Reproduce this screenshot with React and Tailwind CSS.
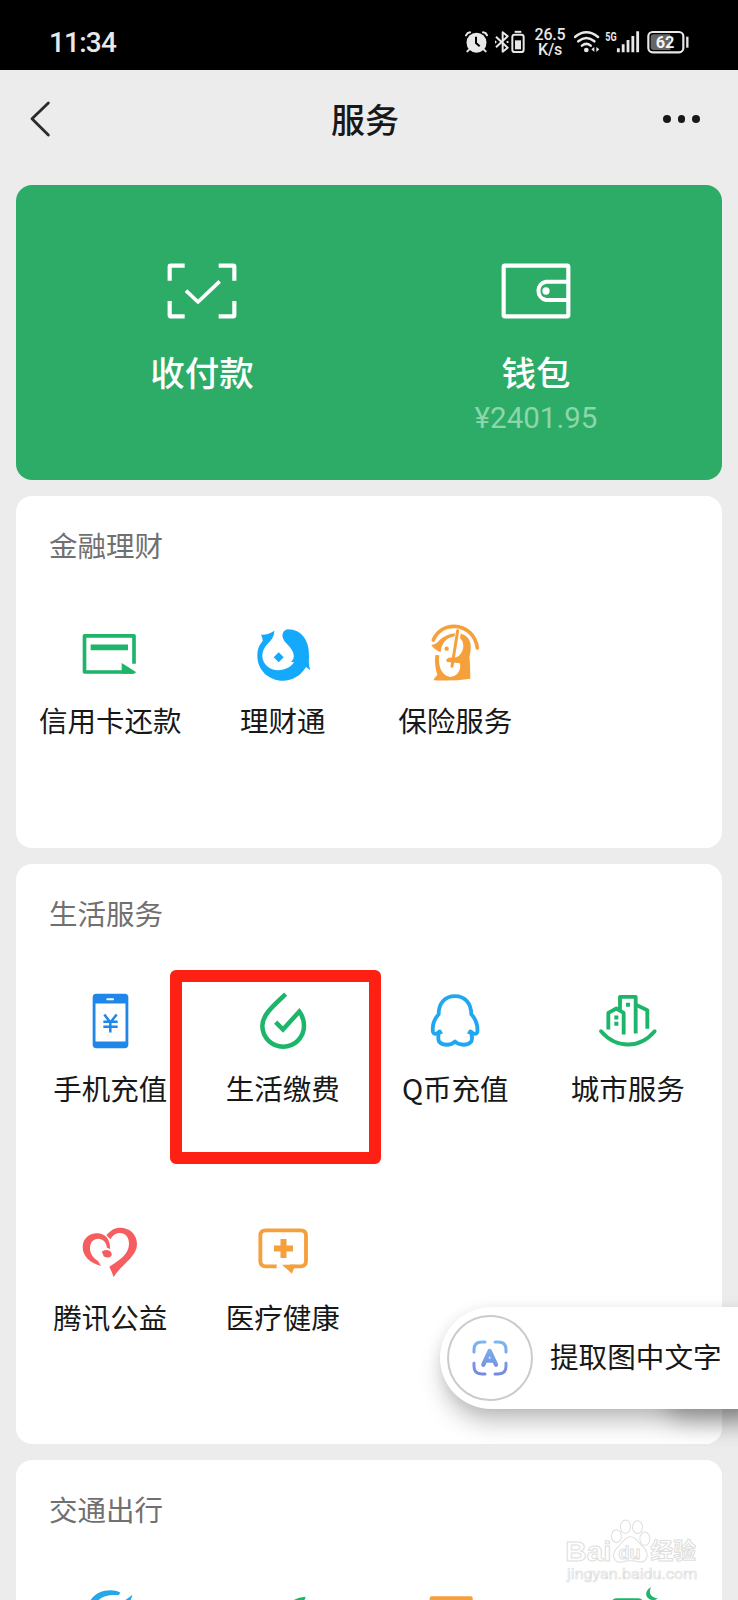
import React from "react";

const GREEN = "#1db56a";
const BLUE = "#14a9fb";
const ORANGE = "#f6a03c";

const Svg = ({ box, children, className = "h-[60px] w-[60px]" }) => (
  <svg viewBox={box} className={`shrink-0 ${className}`} fill="none">
    {children}
  </svg>
);

const CreditIcon = () => (
  <Svg box="181 337 180 180">
    <path d="M343 459V375.500H194.500V484H340" stroke={GREEN} strokeWidth="11" strokeLinejoin="round" />
    <path d="M213 410H325" stroke={GREEN} strokeWidth="17" />
    <path d="M306 457L349 484Q347 489 342 489H306Z" fill={GREEN} />
  </Svg>
);

const FundIcon = () => (
  <Svg box="698 337 180 180">
    <path
      fill={BLUE}
      d="M802 356C845 356 868 392 866 438Q864 462 870 479L857 469C842 495 815 510 788 510C745 510 711 478 711 435C711 415 717 402 727 391Q727 380 722 372Q742 374 762 360Q762 378 748 393C733 407 726 420 726 437C727 462 749 479 773 479C796 479 813 468 821 455L812 453Q822 446 820 433C818 408 790 400 786 376Q787 358 802 356Z"
    />
    <path d="M775 425L790 440L775 455L760 440Z" fill={BLUE} />
  </Svg>
);

const InsuranceIcon = () => (
  <Svg box="256 67 180 180">
    <path d="M281 118C292 92 315 77 343 77C380 77 408 104 413 142" stroke={ORANGE} strokeWidth="11" strokeLinecap="round" />
    <path
      fill={ORANGE}
      d="M287 163L299 164C295 193 303 225 332 229C357 227 364 205 361 188L322 184Q316 176 327 171L350 170Q369 160 371 138Q371 120 361 113L363 99C385 103 396 122 393 148Q387 168 391 190L392 234Q340 242 281 239Q284 230 293 223Q283 190 287 163Z"
    />
    <path fill={ORANGE} d="M275 133Q290 131 300 118Q318 101 346 98L345 107Q322 112 313 125Q304 137 303 155Q285 149 275 133Z" />
    <path d="M354 90L337 197" stroke={ORANGE} strokeWidth="9" strokeLinecap="round" />
    <circle cx="321" cy="144" r="6.500" fill={ORANGE} />
  </Svg>
);

const PhoneIcon = () => (
  <Svg box="151 91.500 180 180">
    <rect x="189" y="100" width="107" height="163" rx="11" fill="#1f86ea" />
    <rect x="197.500" y="129" width="90" height="114" fill="#fff" />
    <path d="M233 116H250" stroke="#fff" strokeWidth="6" strokeLinecap="round" />
    <path d="M224 162L242 186L261 162M242 186V216M221 184H264M221 199H264" stroke="#1f86ea" strokeWidth="7.500" />
  </Svg>
);

const DropIcon = () => (
  <Svg box="668 91.500 180 180">
    <path
      d="M766 101C732 133 696 162 696 196A62.500 62.500 0 0 0 821 196Q821 172 807 153L758 207L736 185"
      stroke={GREEN}
      strokeWidth="13.500"
    />
  </Svg>
);

const QCoinIcon = () => (
  <Svg box="136 91.500 180 180">
    <path
      d="M226 107C196 107 177 128 177 161C163 177 157 195 160 214Q165 227 179 213Q173 232 178 243C188 256 214 256 226 243C239 256 264 256 275 243Q280 232 273 213Q288 227 293 214C295 195 289 177 275 161C274 128 256 107 226 107Z"
      stroke="#1fa8f0"
      strokeWidth="11.500"
      strokeLinejoin="round"
    />
    <path d="M183 206L190 220L176 221ZM269 206L262 220L276 221Z" fill="#1fa8f0" />
  </Svg>
);

const CityIcon = () => (
  <Svg box="653 91.500 180 180">
    <g stroke={GREEN} strokeWidth="11.500">
      <path d="M662 212Q697 252 743 252Q789 252 823 212" strokeLinecap="round" />
      <path d="M684 207V157L708 144L730 157V222" strokeLinejoin="round" />
      <path d="M719 148V109H766V219" strokeLinejoin="round" />
      <path d="M767 133L801 149V205" strokeLinejoin="round" />
    </g>
    <path d="M737 127h12v12h-12zM702 165h12v12h-12zM702 184h12v12h-12z" fill={GREEN} />
  </Svg>
);

const HeartIcon = () => (
  <Svg box="151 57 180 180">
    <g fill="#f65d61">
      <path d="M241 144C242 116 228 97 202 97C177 97 159 114 159 139C159 168 184 187 214 195L205 180C190 171 181 158 181 142C181 124 191 113 206 113C220 113 230 124 232 140Z" />
      <path d="M230 103C243 87 256 80 271 80C300 80 322 100 322 129C322 168 277 188 252 228Q246 212 239 197C270 177 298 159 298 128C298 108 286 96 271 96C257 96 249 104 242 115Z" />
      <path d="M216 152Q226 144 240 149Q249 156 245 165Q236 174 222 166Q220 158 216 152Z" />
    </g>
  </Svg>
);

const MedicalIcon = () => (
  <Svg box="668 57 180 180">
    <path
      d="M739 196H706Q690 196 690 180V104Q690 88 706 88H811Q827 88 827 104V180Q827 196 811 196H778"
      stroke={ORANGE}
      strokeWidth="11.500"
    />
    <path d="M755 191H795L785 218Z" fill={ORANGE} />
    <path d="M731 142.500H788M759.500 114V171" stroke={ORANGE} strokeWidth="18" />
  </Svg>
);

const TravelIcon = () => (
  <Svg box="241 439.500 180 180">
    <path
      fill="#27a6e8"
      d="M266 490C281 460 305 449 332 449Q350 449 362 456L357 464C325 461 300 468 288 490V530H266ZM398 463Q396 478 384 492H346Q378 482 398 463Z"
    />
  </Svg>
);

const LeafIcon = () => (
  <Svg box="758 439.500 180 180">
    <path fill={GREEN} d="M916 469Q914 480 902 490H866Q884 470 916 469ZM846 481Q858 477 866 483L862 492H850Z" />
  </Svg>
);

const TicketIcon = () => (
  <Svg box="76 289.500 180 180">
    <rect x="90" y="317" width="129" height="120" rx="6" fill={ORANGE} />
  </Svg>
);

const HotelIcon = () => (
  <Svg box="593 289.500 180 180">
    <path fill={GREEN} d="M634 340Q634 323 648 323H714Q728 323 730 340ZM752 290C744 307 750 320 772 324C764 331 750 330 742 322C733 311 738 297 752 290Z" />
  </Svg>
);

const finance = [
  { label: "信用卡还款", icon: CreditIcon },
  { label: "理财通", icon: FundIcon },
  { label: "保险服务", icon: InsuranceIcon },
];

const life = [
  { label: "手机充值", icon: PhoneIcon },
  { label: "生活缴费", icon: DropIcon },
  { label: "Q币充值", icon: QCoinIcon },
  { label: "城市服务", icon: CityIcon },
  { label: "腾讯公益", icon: HeartIcon },
  { label: "医疗健康", icon: MedicalIcon },
];

const travel = [{ icon: TravelIcon }, { icon: LeafIcon }, { icon: TicketIcon }, { icon: HotelIcon }];

const Section = ({ title, items, className = "" }) => (
  <section className={`mx-4 mt-4 shrink-0 rounded-2xl bg-white px-2 ${className}`}>
    <h2 className="h-[91px] pt-[29px] pl-[25px] text-[28.500px] leading-10 text-[#707070]">{title}</h2>
    <div className="grid grid-cols-4">
      {items.map(({ label, icon: Icon }, i) => (
        <div key={i} className="flex h-[228.500px] flex-col items-center pt-9">
          <Icon />
          <span className="mt-[17px] text-[28.500px] leading-10 whitespace-nowrap text-[#181818]">{label}</span>
        </div>
      ))}
    </div>
  </section>
);

const StatusBar = () => (
  <div className="flex h-[70px] shrink-0 items-center justify-between bg-black pt-[14px] pr-[49px] pl-[49px] font-['Roboto',sans-serif] text-[#e8e8e8]">
    <span className="mt-[2px] text-[28px] leading-8 font-medium tracking-[-0.8px]">11:34</span>
    <div className="flex items-center">
      <Svg box="75 81 69 90" className="h-[30px] w-[23px]">
        <circle cx="109.500" cy="128" r="30" fill="#e8e8e8" />
        <path d="M78 106Q82 98 90 97M129 97Q138 98 141 106M88 148L82 154M131 148L137 154" stroke="#e8e8e8" strokeWidth="6" strokeLinecap="round" />
        <path d="M108 110V129L119 139" stroke="#000" strokeWidth="6" />
      </Svg>
      <Svg box="165 81 42 90" className="ml-[7px] h-[30px] w-[14px]">
        <path d="M168 110L203 143L188 155V97L203 109L168 142" stroke="#e8e8e8" strokeWidth="6" strokeLinejoin="round" />
        <path d="M165 121l6 5l-6 5zM198 126l5-4l4 4l-4 4z" fill="#e8e8e8" />
      </Svg>
      <Svg box="213 81 42 90" className="ml-[2px] h-[30px] w-[14px]">
        <rect x="217" y="104" width="34" height="52" rx="7" stroke="#e8e8e8" strokeWidth="6" />
        <path d="M224 95.500H244" stroke="#e8e8e8" strokeWidth="6" />
        <path d="M225 121H243V148H225Z" fill="#e8e8e8" />
      </Svg>
      <div className="ml-[9px] flex w-8 flex-col items-center text-[16px] leading-[15px] font-medium tracking-[-0.2px]">
        <span>26.5</span>
        <span>K/s</span>
      </div>
      <Svg box="402 81 78 90" className="ml-2 h-[30px] w-[26px]">
        <path d="M405 111Q439 83 474 111M415 124Q439 104 463 124M426 137Q439 126 452 137" stroke="#e8e8e8" strokeWidth="7.500" strokeLinecap="round" />
        <circle cx="439" cy="150" r="7" fill="#e8e8e8" />
        <path d="M454 148L463 141V156ZM478 148L469 141V156Z" fill="#e8e8e8" />
      </Svg>
      <Svg box="495 81 105 90" className="ml-[5px] h-[30px] w-[35px]">
        <text x="496" y="122" fontSize="38" fontWeight="700" textLength="34" lengthAdjust="spacingAndGlyphs" fill="#e8e8e8">
          5G
        </text>
        <path d="M535 157V145M549.500 157V133M564 157V120M578.500 157V108M593 157V94" stroke="#e8e8e8" strokeWidth="8.500" />
      </Svg>
      <Svg box="621 81 126 90" className="ml-[7px] h-[30px] w-[42px]">
        <rect x="625" y="96" width="105" height="61" rx="13" stroke="#e8e8e8" strokeWidth="6.500" />
        <path d="M641 103H691V150H641Q632 150 632 141V112Q632 103 641 103Z" fill="#666" />
        <path d="M742 110V143" stroke="#e8e8e8" strokeWidth="7" />
        <text x="675" y="144" fontSize="49" fontWeight="700" textAnchor="middle" fill="#f4f4f4">
          62
        </text>
      </Svg>
    </div>
  </div>
);

const Header = () => (
  <header className="flex h-[100px] shrink-0 items-center justify-between pr-[39px] pl-7">
    <Svg box="84 297 72 120" className="mb-[2px] h-10 w-6">
      <path d="M145 309L96 356.500L145 405" stroke="#2b2b2b" strokeWidth="8.500" strokeLinecap="round" strokeLinejoin="round" />
    </Svg>
    <h1 className="mb-[2px] ml-[15px] text-[34px] leading-10 font-medium text-[#181818]">服务</h1>
    <div className="mb-[2px] flex w-9 gap-[7.200px]">
      <i className="h-[7.500px] w-[7.500px] shrink-0 rounded-full bg-[#181818]" />
      <i className="h-[7.500px] w-[7.500px] shrink-0 rounded-full bg-[#181818]" />
      <i className="h-[7.500px] w-[7.500px] shrink-0 rounded-full bg-[#181818]" />
    </div>
  </header>
);

const PayCard = () => (
  <section className="mx-4 mt-[15px] flex h-[295px] shrink-0 rounded-2xl bg-[#2dac68] px-[19px] pt-[76px] text-white">
    <div className="flex flex-1 flex-col items-center">
      <Svg box="112 64 210 180" className="h-[60px] w-[70px]">
        <path
          d="M120 123V81Q120 78 123 78H165M267 78H311Q314 78 314 81V123M314 184V227Q314 230 311 230H267M165 230H123Q120 230 120 227V184"
          stroke="#fff"
          strokeWidth="12.500"
        />
        <path d="M169 153L205 187L270 125" stroke="#fff" strokeWidth="11" strokeLinejoin="round" />
      </Svg>
      <span className="mt-7 text-[34.500px] leading-[44px] font-medium">收付款</span>
    </div>
    <div className="flex flex-1 flex-col items-center">
      <Svg box="153 64 210 180" className="h-[60px] w-[70px]">
        <rect x="161" y="78" width="194" height="152" rx="4" stroke="#fff" strokeWidth="12.500" />
        <path d="M352 126H288A28 28 0 0 0 288 181H352" stroke="#fff" strokeWidth="12" />
        <circle cx="288" cy="154" r="11" fill="#fff" />
      </Svg>
      <span className="mt-7 text-[34.500px] leading-[44px] font-medium">钱包</span>
      <span className="mt-[9px] font-['Roboto',sans-serif] text-[29.500px] leading-8 text-[#8cd6ab]">¥2401.95</span>
    </div>
  </section>
);

const ExtractButton = () => (
  <div className="absolute top-[1307px] right-0 h-[102px] w-[298px]">
    <div className="absolute -right-6 -bottom-3 h-10 w-24 rounded-full bg-black/25 blur-[12px]" />
    <div className="relative flex h-full w-[340px] items-center rounded-l-full bg-white pl-[7px] shadow-[0_16px_24px_-4px_rgba(0,0,0,0.26),0_0_14px_rgba(0,0,0,0.07)]">
      <div className="flex h-[86px] w-[86px] items-center justify-center rounded-full border-2 border-[#cbcbcb]">
        <Svg box="156 179 108 108" className="h-9 w-9">
          <defs>
            <linearGradient id="scan" x1="0" y1="181" x2="0" y2="285" gradientUnits="userSpaceOnUse">
              <stop stopColor="#7db8ee" />
              <stop offset="1" stopColor="#7488e0" />
            </linearGradient>
          </defs>
          <g stroke="url(#scan)" strokeLinecap="round" strokeLinejoin="round">
            <path
              d="M162 215V208Q162 185 185 185H195M225 185H235Q258 185 258 208V215M258 248V258Q258 281 235 281H225M195 281H185Q162 281 162 258V248"
              strokeWidth="9"
            />
            <path d="M190 253L209 212L228 253M200 241H218" strokeWidth="13" />
          </g>
        </Svg>
      </div>
      <span className="mb-1 ml-[17px] text-[28.600px] leading-10 whitespace-nowrap text-[#181818]">提取图中文字</span>
    </div>
  </div>
);

const Watermark = () => (
  <svg viewBox="490 85 410 200" className="absolute top-[1518px] left-[563px] h-[67px] w-[137px]" fill="#fff" stroke="#dedede" strokeWidth="3">
    <text x="497" y="212" fontSize="84" fontWeight="700" textLength="138" lengthAdjust="spacingAndGlyphs" fontFamily="Liberation Sans, sans-serif">
      Bai
    </text>
    <ellipse cx="650" cy="139" rx="15" ry="19" />
    <ellipse cx="677" cy="111" rx="15" ry="20" />
    <ellipse cx="713" cy="112" rx="15" ry="19" />
    <ellipse cx="735" cy="147" rx="15" ry="20" />
    <path d="M692 141C710 141 716 160 732 174C750 192 742 217 720 217Q706 213 692 213Q678 213 664 217C640 217 634 192 652 174C668 160 674 141 692 141Z" />
    <text x="656" y="206" fontSize="54" fontWeight="700" textLength="66" lengthAdjust="spacingAndGlyphs" fontFamily="Liberation Sans, sans-serif">
      du
    </text>
    <text x="752" y="207" fontSize="68" fontWeight="700" textLength="136" fontFamily="Noto Sans CJK SC, sans-serif">
      经验
    </text>
    <text x="502" y="268" fontSize="44" textLength="390" lengthAdjust="spacingAndGlyphs" strokeWidth="2" fontFamily="Roboto, sans-serif">
      jingyan.baidu.com
    </text>
  </svg>
);

export default function App() {
  return (
    <div className="relative flex h-[1600px] w-[738px] flex-col overflow-hidden bg-[#ececec] font-['Noto_Sans_CJK_SC',sans-serif]">
      <StatusBar />
      <Header />
      <PayCard />
      <Section title="金融理财" items={finance} className="h-[352px]" />
      <Section title="生活服务" items={life} className="h-[580px]" />
      <Section title="交通出行" items={travel} className="h-[400px]" />

      {/* highlight around 生活缴费 */}
      <div className="absolute top-[970px] left-[170px] h-[194px] w-[211px] rounded-md border-12 border-[#fe2012]" />
      <ExtractButton />
      <Watermark />
    </div>
  );
}
